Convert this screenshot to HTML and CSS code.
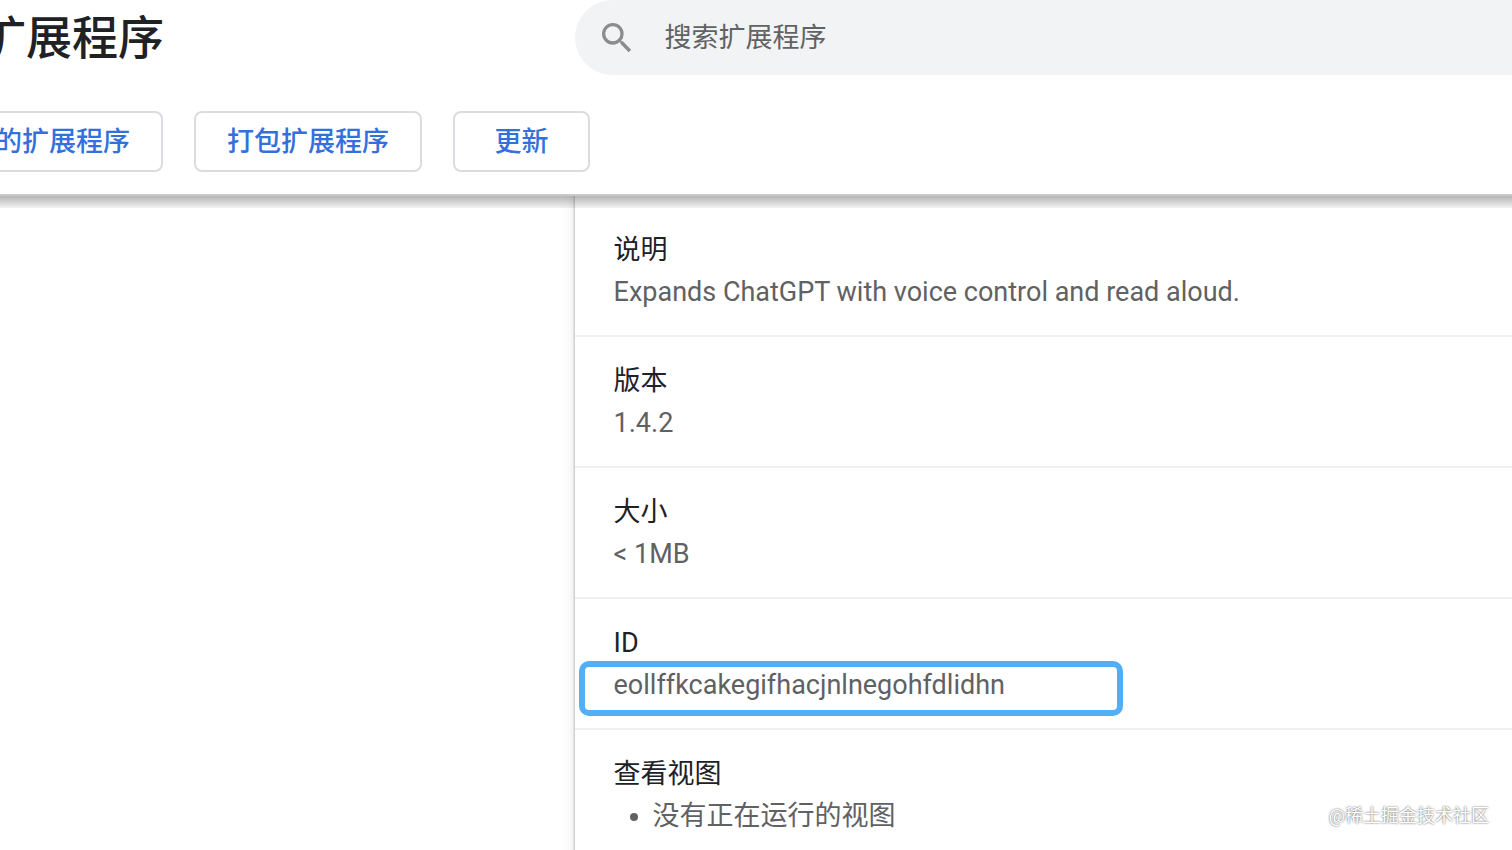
FILE: index.html
```html
<!DOCTYPE html>
<html lang="zh-CN">
<head>
<meta charset="utf-8">
<meta name="viewport" content="width=device-width, initial-scale=1">
<title>扩展程序</title>
<link rel="stylesheet" href="styles.css">
</head>
<body>
<header class="header">
  <div class="topbar">
    <h1 class="title">扩展程序</h1>
    <label class="search">
      <svg class="search-icon" viewBox="0 0 24 24" aria-hidden="true"><path d="M15.5 14h-.79l-.28-.27A6.471 6.471 0 0 0 16 9.500 6.500 6.500 0 1 0 9.500 16c1.610 0 3.090-.59 4.230-1.570l.27.28v.79l5 4.990L20.490 19l-4.990-5zm-6 0C7.010 14 5 11.990 5 9.500S7.010 5 9.500 5 14 7.010 14 9.500 11.990 14 9.500 14z"/></svg>
      <input class="search-input" type="search" placeholder="搜索扩展程序" aria-label="搜索扩展程序">
    </label>
  </div>
  <div class="toolbar">
    <button class="button" type="button">的扩展程序</button>
    <button class="button" type="button">打包扩展程序</button>
    <button class="button" type="button">更新</button>
  </div>
</header>
<main class="content">
  <div class="card">
    <section class="row">
      <h2 class="label">说明</h2>
      <p class="value">Expands ChatGPT with voice control and read aloud.</p>
    </section>
    <section class="row">
      <h2 class="label">版本</h2>
      <p class="value">1.4.2</p>
    </section>
    <section class="row">
      <h2 class="label">大小</h2>
      <p class="value">&lt; 1MB</p>
    </section>
    <section class="row">
      <h2 class="label">ID</h2>
      <p class="value marked">eollffkcakegifhacjnlnegohfdlidhn</p>
    </section>
    <section class="row">
      <h2 class="label">查看视图</h2>
      <ul class="value views"><li>没有正在运行的视图</li></ul>
    </section>
  </div>
</main>
<div class="watermark">@稀土掘金技术社区</div>
</body>
</html>
```
FILE: styles.css
```css
*, *::before, *::after { box-sizing: border-box; }

body {
  margin: 0;
  height: 100vh;
  overflow: hidden;
  display: flex;
  flex-direction: column;
  position: relative;
  background: #fff;
  color: #202124;
  font-family: Roboto, "Noto Sans CJK SC", sans-serif;
  font-size: 27px;
  line-height: 42px;
}

h1, h2, p, ul { margin: 0; padding: 0; }

.header {
  position: relative;
  z-index: 1;
  flex: none;
  padding-bottom: 22px;
  background: #fff;
  border-bottom: 2px solid #c9c9c9;
}

.header::after {
  content: "";
  position: absolute;
  top: 100%;
  left: 0;
  right: 0;
  margin-top: 2px;
  height: 12px;
  background: linear-gradient(rgba(0, 0, 0, .29), rgba(0, 0, 0, .05));
}

.topbar {
  display: grid;
  grid-template-columns: 38% 1fr;
}

.title {
  margin-left: -20px;
  font-size: 46px;
  font-weight: 500;
  line-height: 76px;
}

.search {
  display: flex;
  align-items: center;
  gap: 28px;
  height: 75px;
  padding-left: 22px;
  background: #f1f3f4;
  border-radius: 38px 0 0 38px;
}

.search-icon {
  flex: none;
  width: 40px;
  height: 40px;
  fill: #8a8c8e;
}

.search-input {
  flex: 1;
  min-width: 0;
  padding: 0;
  border: 0;
  outline: 0;
  background: none;
  color: #5f6368;
  font: inherit;
}

.search-input::placeholder { color: #606264; opacity: 1; }

.toolbar {
  display: flex;
  gap: 31px;
  margin: 35px 0 0 -38px;
}

.button {
  min-width: 137px;
  height: 61px;
  padding: 0 31px;
  border: 2px solid #dadce0;
  border-radius: 8px;
  background: #fff;
  color: #3370dc;
  font: inherit;
  font-weight: 500;
}

.content {
  flex: 1;
  min-height: 0;
  padding-left: 38%;
}

.card {
  min-height: 100%;
  padding-top: 10px;
  background: #fff;
  box-shadow: 0 0 2px 1px rgba(0, 0, 0, .2), 0 0 10px 3px rgba(0, 0, 0, .08);
}

.row {
  padding: 23px 39px 22px;
  border-bottom: 2px solid #f0f0f0;
}

.label {
  font-size: 27px;
  font-weight: 400;
}

.value { color: #5f6163; }

.marked {
  position: relative;
  width: fit-content;
}

.marked::after {
  content: "";
  position: absolute;
  top: -3px;
  left: -35px;
  width: 544px;
  height: 55px;
  border: 6px solid #52aff5;
  border-radius: 10px;
}

.views { padding-left: 39px; }

.watermark {
  position: absolute;
  right: 23px;
  bottom: 20px;
  color: #fff;
  font-size: 18px;
  line-height: 28px;
  text-shadow: 0 0 2px #444;
}
```
